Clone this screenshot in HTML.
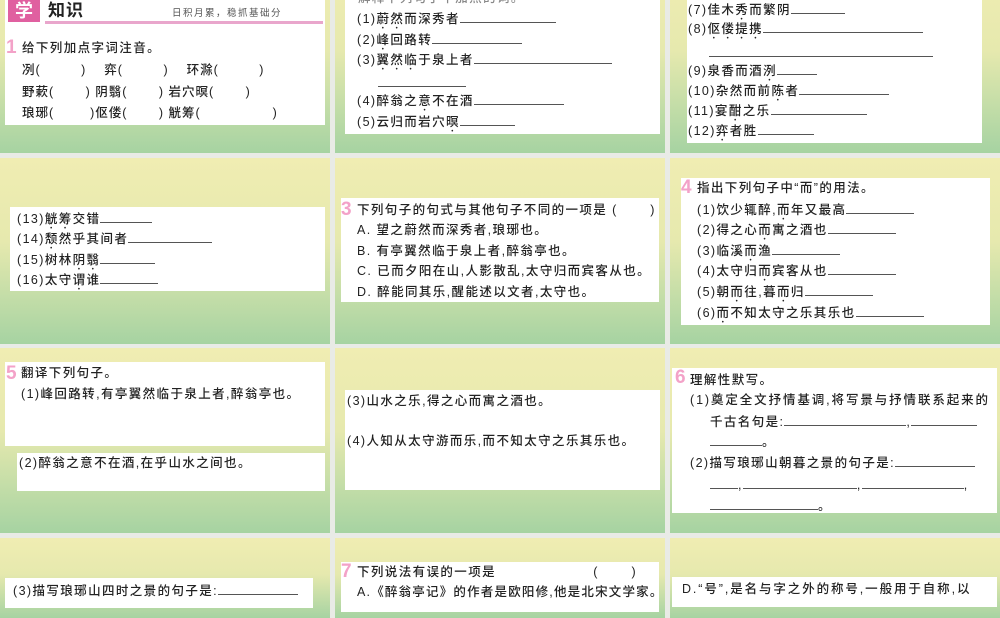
<!DOCTYPE html>
<html><head><meta charset="utf-8"><style>
body{margin:0;width:1000px;height:600px;overflow:hidden;background:#e9ebe6;position:relative;font-family:"Liberation Sans","Noto Sans CJK SC",sans-serif;color:#222}
.s{position:absolute;width:330px;background:linear-gradient(#f0edb2 0%,#e6e9ae 45%,#a6d3a2 100%);overflow:hidden}
.b{position:absolute;background:#fff}
.t{position:absolute;font-size:12.5px;line-height:14px;letter-spacing:1.4px;white-space:nowrap;font-weight:500}
.u{display:inline-block;border-bottom:1px solid #555;height:11px;vertical-align:baseline}
.n{position:absolute;color:#f3a2c8;font-weight:bold;font-size:19px;line-height:19px}
.d{text-emphasis:dot;-webkit-text-emphasis:filled dot;text-emphasis-position:under;-webkit-text-emphasis-position:under}
</style></head><body>

<!-- row1 -->
<div class="s" style="left:0;top:-33px;height:186px"></div>
<div class="b" style="left:5px;top:0;width:320px;height:125px"></div>
<div style="position:absolute;left:8px;top:0;width:32px;height:22px;background:#e060a0;color:#fff;font-size:18px;line-height:20px;text-align:center;font-weight:bold;font-family:'Noto Sans CJK SC',sans-serif">学</div>
<div class="t" style="left:48px;top:2px;font-size:17px;line-height:18px;font-weight:bold;letter-spacing:1px">知识</div>
<div class="t" style="left:172px;top:7px;font-size:9.5px;letter-spacing:1.5px;color:#555;font-weight:normal">日积月累，稳抓基础分</div>
<div style="position:absolute;left:45px;top:21px;width:278px;height:3px;background:#e9a6cc"></div>
<div class="n" style="left:6px;top:38px">1</div>
<div class="t" style="left:22px;top:41px">给下列加点字词注音。</div>
<div class="t" style="left:22px;top:63px;letter-spacing:1px">冽(　　　)　&nbsp;弈(　　　)　&nbsp;环滁(　　　)</div>
<div class="t" style="left:22px;top:85px;letter-spacing:1px">野蔌(　　&nbsp;)&nbsp;阴翳(　　&nbsp;)&nbsp;岩穴暝(　　&nbsp;)</div>
<div class="t" style="left:22px;top:106px;letter-spacing:1px">琅琊(　　&nbsp;&nbsp;)伛偻(　　&nbsp;)&nbsp;觥筹(　　　　　&nbsp;)</div>

<div class="s" style="left:335px;top:-33px;height:186px"></div>
<div class="b" style="left:345px;top:0;width:315px;height:134px"></div>
<div class="t" style="left:358px;top:-9px;color:#888">解释下列句子中加点的词。</div>
<div class="t" style="left:357px;top:11px">(1)<span class="d">蔚然</span>而深秀者<span class="u" style="width:96px"></span></div>
<div class="t" style="left:357px;top:32px">(2)<span class="d">峰</span>回路转<span class="u" style="width:90px"></span></div>
<div class="t" style="left:357px;top:52px">(3)<span class="d">翼然临</span>于泉上者<span class="u" style="width:138px"></span></div>
<div style="position:absolute;left:378px;top:86px;width:88px;border-top:1px solid #555"></div>
<div class="t" style="left:357px;top:93px">(4)醉翁之<span class="d">意</span>不在酒<span class="u" style="width:90px"></span></div>
<div class="t" style="left:357px;top:114px">(5)云归而岩穴<span class="d">暝</span><span class="u" style="width:55px"></span></div>

<div class="s" style="left:670px;top:-33px;height:186px"></div>
<div class="b" style="left:687px;top:0;width:295px;height:143px"></div>
<div class="t" style="left:688px;top:2px">(7)佳木<span class="d">秀</span>而繁阴<span class="u" style="width:54px"></span></div>
<div class="t" style="left:688px;top:21px">(8)<span class="d">伛偻提携</span><span class="u" style="width:160px"></span></div>
<div style="position:absolute;left:709px;top:56px;width:224px;border-top:1px solid #555"></div>
<div class="t" style="left:688px;top:63px">(9)泉香而酒<span class="d">洌</span><span class="u" style="width:40px"></span></div>
<div class="t" style="left:688px;top:83px">(10)杂然而前<span class="d">陈</span>者<span class="u" style="width:90px"></span></div>
<div class="t" style="left:688px;top:103px">(11)宴<span class="d">酣</span>之乐<span class="u" style="width:96px"></span></div>
<div class="t" style="left:688px;top:123px">(12)<span class="d">弈</span>者胜<span class="u" style="width:56px"></span></div>

<!-- row2 -->
<div class="s" style="left:0;top:158px;height:186px"></div>
<div class="b" style="left:10px;top:207px;width:315px;height:84px"></div>
<div class="t" style="left:17px;top:211px">(13)<span class="d">觥筹</span>交错<span class="u" style="width:52px"></span></div>
<div class="t" style="left:17px;top:231px">(14)<span class="d">颓</span>然乎其间者<span class="u" style="width:84px"></span></div>
<div class="t" style="left:17px;top:252px">(15)树林<span class="d">阴翳</span><span class="u" style="width:55px"></span></div>
<div class="t" style="left:17px;top:272px">(16)太守<span class="d">谓</span>谁<span class="u" style="width:58px"></span></div>

<div class="s" style="left:335px;top:158px;height:186px"></div>
<div class="b" style="left:341px;top:198px;width:318px;height:104px"></div>
<div class="n" style="left:341px;top:200px">3</div>
<div class="t" style="left:357px;top:203px">下列句子的句式与其他句子不同的一项是 (　 　)</div>
<div class="t" style="left:357px;top:223px">A. 望之蔚然而深秀者,琅琊也。</div>
<div class="t" style="left:357px;top:244px">B. 有亭翼然临于泉上者,醉翁亭也。</div>
<div class="t" style="left:357px;top:264px">C. 已而夕阳在山,人影散乱,太守归而宾客从也。</div>
<div class="t" style="left:357px;top:285px">D. 醉能同其乐,醒能述以文者,太守也。</div>

<div class="s" style="left:670px;top:158px;height:186px"></div>
<div class="b" style="left:681px;top:178px;width:309px;height:147px"></div>
<div class="n" style="left:681px;top:178px">4</div>
<div class="t" style="left:697px;top:181px">指出下列句子中“而”的用法。</div>
<div class="t" style="left:697px;top:202px">(1)饮少辄醉,<span class="d">而</span>年又最高<span class="u" style="width:68px"></span></div>
<div class="t" style="left:697px;top:222px">(2)得之心<span class="d">而</span>寓之酒也<span class="u" style="width:68px"></span></div>
<div class="t" style="left:697px;top:243px">(3)临溪<span class="d">而</span>渔<span class="u" style="width:68px"></span></div>
<div class="t" style="left:697px;top:263px">(4)太守归<span class="d">而</span>宾客从也<span class="u" style="width:68px"></span></div>
<div class="t" style="left:697px;top:284px">(5)朝<span class="d">而</span>往,暮<span class="d">而</span>归<span class="u" style="width:68px"></span></div>
<div class="t" style="left:697px;top:305px"><span>(6)</span><span class="d">而</span>不知太守之乐其乐也<span class="u" style="width:68px"></span></div>

<!-- row3 -->
<div class="s" style="left:0;top:348px;height:185px"></div>
<div class="b" style="left:5px;top:362px;width:320px;height:84px"></div>
<div class="b" style="left:17px;top:453px;width:308px;height:38px"></div>
<div class="n" style="left:6px;top:364px">5</div>
<div class="t" style="left:21px;top:366px">翻译下列句子。</div>
<div class="t" style="left:21px;top:387px">(1)峰回路转,有亭翼然临于泉上者,醉翁亭也。</div>
<div class="t" style="left:19px;top:456px">(2)醉翁之意不在酒,在乎山水之间也。</div>

<div class="s" style="left:335px;top:348px;height:185px"></div>
<div class="b" style="left:345px;top:390px;width:315px;height:100px"></div>
<div class="t" style="left:347px;top:394px">(3)山水之乐,得之心而寓之酒也。</div>
<div class="t" style="left:347px;top:434px">(4)人知从太守游而乐,而不知太守之乐其乐也。</div>

<div class="s" style="left:670px;top:348px;height:185px"></div>
<div class="b" style="left:672px;top:368px;width:325px;height:145px"></div>
<div class="n" style="left:675px;top:368px">6</div>
<div class="t" style="left:690px;top:373px">理解性默写。</div>
<div class="t" style="left:690px;top:393px;letter-spacing:1.9px">(1)奠定全文抒情基调,将写景与抒情联系起来的</div>
<div class="t" style="left:710px;top:414px">千古名句是:<span class="u" style="width:122px"></span>,<span class="u" style="width:66px"></span></div>
<div class="t" style="left:710px;top:434px"><span class="u" style="width:52px"></span>。</div>
<div class="t" style="left:690px;top:455px">(2)描写琅琊山朝暮之景的句子是:<span class="u" style="width:80px"></span></div>
<div class="t" style="left:710px;top:477px"><span class="u" style="width:28px"></span>,<span class="u" style="width:114px"></span>,<span class="u" style="width:102px"></span>,</div>
<div class="t" style="left:710px;top:498px"><span class="u" style="width:108px"></span>。</div>

<!-- row4 -->
<div class="s" style="left:0;top:538px;height:80px"></div>
<div class="b" style="left:5px;top:578px;width:308px;height:30px"></div>
<div class="t" style="left:13px;top:583px">(3)描写琅琊山四时之景的句子是:<span class="u" style="width:80px"></span></div>

<div class="s" style="left:335px;top:538px;height:80px"></div>
<div class="b" style="left:341px;top:562px;width:318px;height:50px"></div>
<div class="n" style="left:341px;top:562px">7</div>
<div class="t" style="left:357px;top:565px">下列说法有误的一项是　　　　　　　(　　 )</div>
<div class="t" style="left:357px;top:585px;letter-spacing:1.2px">A.《醉翁亭记》的作者是欧阳修,他是北宋文学家。</div>

<div class="s" style="left:670px;top:538px;height:80px"></div>
<div class="b" style="left:672px;top:577px;width:325px;height:30px"></div>
<div class="t" style="left:682px;top:582px;letter-spacing:1.9px">D.“号”,是名与字之外的称号,一般用于自称,以</div>
</body></html>
